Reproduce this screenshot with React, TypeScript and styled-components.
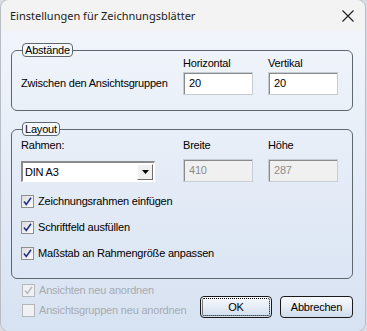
import React from 'react'
import styled, { createGlobalStyle } from 'styled-components'

const GlobalStyle = createGlobalStyle`
  html, body {
    margin: 0;
    padding: 0;
    background: #d9dde3;
  }
  body {
    font-family: "Liberation Sans", Arial, sans-serif;
    font-size: 11px;
    letter-spacing: -0.2px;
    color: #000;
  }
`

const Window = styled.div`
  width: 364px;
  height: 331px;
  margin-left: 1px;
  border-radius: 8px;
  overflow: hidden;
  box-shadow: 0 0 0 1px #b9bec6;
  display: flex;
  flex-direction: column;
`

const TitleBar = styled.div`
  height: 31px;
  flex: none;
  background: #f3f3f3;
  display: flex;
  align-items: center;
  justify-content: space-between;
  padding: 0 10px 0 9px;
  font-family: "Noto Sans", "Open Sans", sans-serif;
  font-size: 11px;
  letter-spacing: 0;
  color: #1b1b1b;
`

const CloseIcon = () => (
  <svg width="14" height="14" viewBox="0 0 14 14">
    <path d="M1.5 1.5 L12.5 12.5 M12.5 1.5 L1.5 12.5" stroke="#1b1b1b" strokeWidth="1.1" />
  </svg>
)

const Client = styled.div`
  flex: 1;
  background: linear-gradient(#f1f5fb, #d7e2f2);
  padding: 12px 12px 0 10px;
  display: flex;
  flex-direction: column;
`

const Group = styled.fieldset<{ $gap?: number; $pb: number }>`
  margin: 0 0 ${p => p.$gap ?? 0}px 0;
  padding: 0 0 ${p => p.$pb}px 9px;
  border: 1px solid #5e6670;
  border-radius: 6px;
  min-width: 0;
`

const Legend = styled.legend`
  margin-left: 1px;
  padding: 0 2px;
  height: 12px;
  line-height: 12px;
  border: 1px solid #5e6670;
  border-radius: 4px;
  background: #f5f8fc;
`

const Grid = styled.div`
  display: grid;
  grid-template-columns: 147px 70px 70px;
  column-gap: 15px;
  align-items: center;
`

const Label = styled.span<{ $disabled?: boolean }>`
  line-height: 13px;
  white-space: nowrap;
  color: ${p => (p.$disabled ? '#a7abb0' : '#000')};
`

const HeadLabel = styled(Label)<{ $top?: number; $bottom: number }>`
  margin-top: ${p => p.$top ?? 0}px;
  margin-bottom: ${p => p.$bottom}px;
`

const TextBox = styled.div<{ $disabled?: boolean }>`
  height: 23px;
  box-sizing: border-box;
  border-style: solid;
  border-width: 2px 1px 1px 2px;
  border-color: #8a8a8a #ffffff #ffffff #8a8a8a;
  outline: 1px solid #c6ccd3;
  outline-offset: -1px;
  background: ${p => (p.$disabled ? '#f0f0f0' : '#fff')};
  color: ${p => (p.$disabled ? '#8d8d8d' : '#000')};
  padding: 2px 0 0 4px;
  line-height: 14px;
`

const Combo = styled.div`
  width: 134px;
  height: 21px;
  margin-top: 2px;
  box-sizing: border-box;
  border-style: solid;
  border-width: 2px 1px 1px 2px;
  border-color: #8a8a8a #ffffff #ffffff #8a8a8a;
  background: #fff;
  display: flex;
  align-items: center;
  justify-content: space-between;
  padding-left: 2px;
`

const ComboButton = styled.div`
  width: 16px;
  height: 16px;
  box-sizing: border-box;
  margin-right: 1px;
  border: 1px solid;
  border-color: #ffffff #6e6e6e #6e6e6e #ffffff;
  background: #f0f0f0;
  display: flex;
  align-items: center;
  justify-content: center;
`

const Checks = styled.div<{ $row: number; $top?: number }>`
  display: flex;
  flex-direction: column;
  margin-top: ${p => p.$top ?? 0}px;
  > * {
    height: ${p => p.$row}px;
  }
`

const CheckRow = styled.label<{ $disabled?: boolean }>`
  display: flex;
  align-items: center;
  gap: 4px;
  white-space: nowrap;
  color: ${p => (p.$disabled ? '#a7abb0' : '#000')};
`

const Box = styled.span<{ $disabled?: boolean }>`
  width: 13px;
  height: 13px;
  flex: none;
  box-sizing: border-box;
  border: 1px solid ${p => (p.$disabled ? '#b4b8bd' : '#8e8f8f')};
  background: ${p =>
    p.$disabled ? '#f0f1f3' : 'linear-gradient(135deg, #dcdcdc, #fcfcfc)'};
  display: flex;
  align-items: center;
  justify-content: center;
`

const Check = ({ on, disabled, children }: { on?: boolean; disabled?: boolean; children: string }) => (
  <CheckRow $disabled={disabled}>
    <Box $disabled={disabled}>
      {on && (
        <svg width="9" height="9" viewBox="0 0 9 9">
          <path d="M1 4.5 L3.3 7.5 L8 0.8" fill="none" stroke={disabled ? '#b8bcc2' : '#21318c'} strokeWidth="1.6" />
        </svg>
      )}
    </Box>
    {children}
  </CheckRow>
)

const Footer = styled.div`
  display: flex;
  justify-content: space-between;
  align-items: flex-end;
  padding: 1px 0 0 11px;
`

const Buttons = styled.div`
  display: flex;
  gap: 8px;
  margin-bottom: 2px;
`

const Button = styled.button<{ $focused?: boolean }>`
  width: ${p => (p.$focused ? 72 : 73)}px;
  height: 22px;
  box-sizing: border-box;
  border: 1px solid #1a1a1a;
  border-radius: 4px;
  background: linear-gradient(#f7f9fc, #e8eef7 45%, #cfdcec);
  font-family: "Liberation Sans", Arial, sans-serif;
  font-size: 11px;
  letter-spacing: -0.2px;
  color: #000;
  padding: 0;
  outline: ${p => (p.$focused ? '1px dotted #000' : 'none')};
  outline-offset: -3px;
`

export default function App() {
  return (
    <>
      <GlobalStyle />
      <Window>
        <TitleBar>
          <span>Einstellungen für Zeichnungsblätter</span>
          <CloseIcon />
        </TitleBar>
        <Client>
          <Group $gap={11} $pb={15}>
            <Legend>Abstände</Legend>
            <Grid>
              <span />
              <HeadLabel $bottom={2}>Horizontal</HeadLabel>
              <HeadLabel $bottom={2}>Vertikal</HeadLabel>
              <Label>Zwischen den Ansichtsgruppen</Label>
              <TextBox>20</TextBox>
              <TextBox>20</TextBox>
            </Grid>
          </Group>
          <Group $pb={12}>
            <Legend>Layout</Legend>
            <Grid>
              <HeadLabel $top={3} $bottom={7}>Rahmen:</HeadLabel>
              <HeadLabel $top={3} $bottom={7}>Breite</HeadLabel>
              <HeadLabel $top={3} $bottom={7}>Höhe</HeadLabel>
              <Combo>
                DIN A3
                <ComboButton>
                  <svg width="7" height="4" viewBox="0 0 7 4">
                    <path d="M0 0 H7 L3.5 4 Z" fill="#000" />
                  </svg>
                </ComboButton>
              </Combo>
              <TextBox $disabled>410</TextBox>
              <TextBox $disabled>287</TextBox>
            </Grid>
            <Checks $row={26} $top={6}>
              <Check on>Zeichnungsrahmen einfügen</Check>
              <Check on>Schriftfeld ausfüllen</Check>
              <Check on>Maßstab an Rahmengröße anpassen</Check>
            </Checks>
          </Group>
          <Footer>
            <Checks $row={20}>
              <Check on disabled>Ansichten neu anordnen</Check>
              <Check disabled>Ansichtsgruppen neu anordnen</Check>
            </Checks>
            <Buttons>
              <Button $focused>OK</Button>
              <Button>Abbrechen</Button>
            </Buttons>
          </Footer>
        </Client>
      </Window>
    </>
  )
}
